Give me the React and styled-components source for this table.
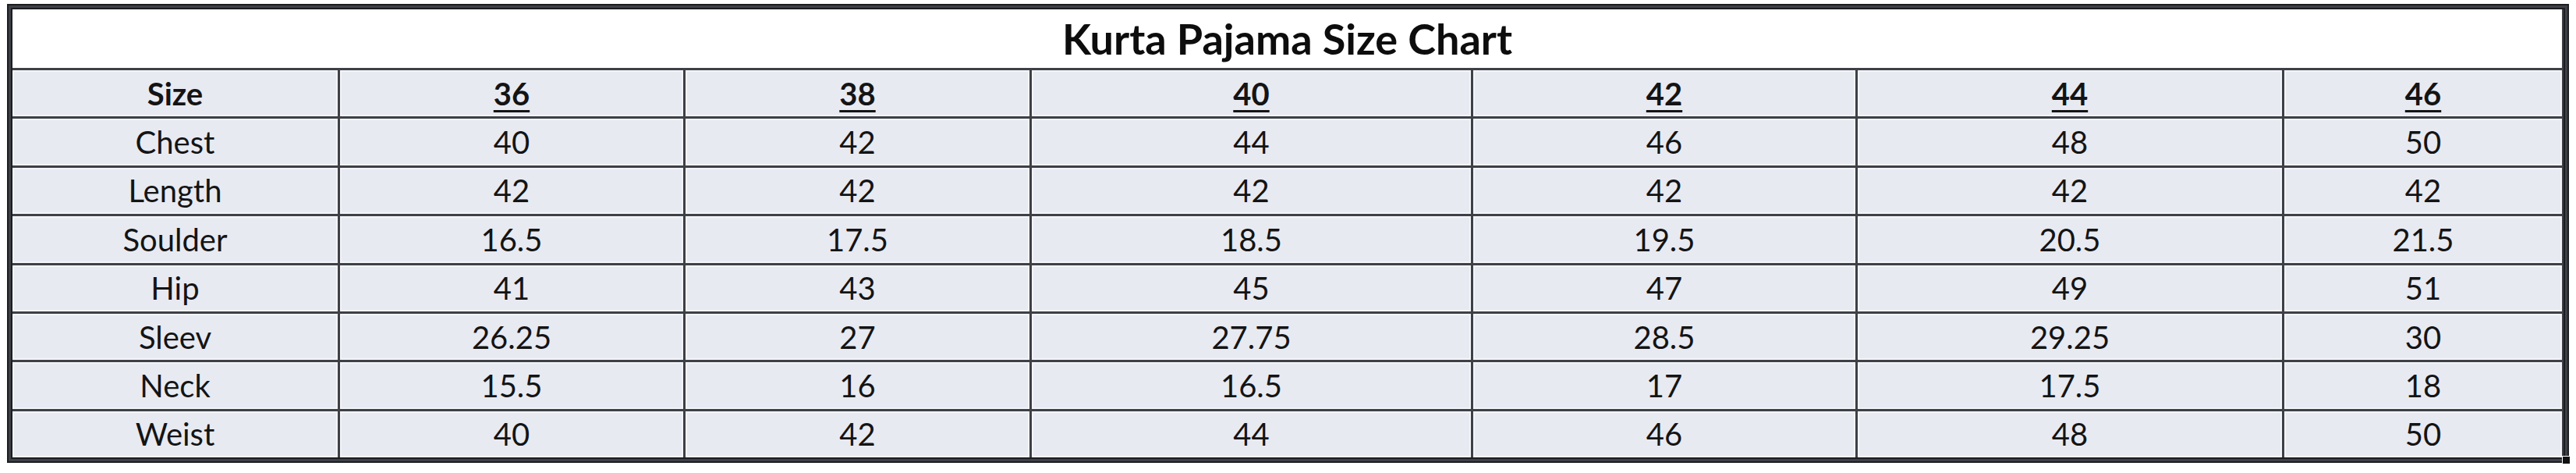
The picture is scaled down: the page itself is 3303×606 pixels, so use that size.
import React from 'react';
import styled, { createGlobalStyle } from 'styled-components';

const GlobalStyle = createGlobalStyle`
    html, body {
        margin: 0;
        padding: 0;
        background: #FFFFFF;
    }
    body {
        font-family: Lato, "Open Sans", "Liberation Sans", sans-serif;
        color: #111111;
    }
`;

const Page = styled.div`
    width: 3303px;
    height: 606px;
    padding: 5px 0 0 9px;
    box-sizing: border-box;
`;

const Frame = styled.div`
    position: relative;
    width: 3285px;
    height: 588px;
    box-sizing: border-box;
    border: 7px double #1c1d20;
    background: #3d4046;
`;

const FillHandle = styled.span`
    position: absolute;
    right: -9px;
    bottom: -9px;
    width: 9px;
    height: 9px;
    background: #111111;
    border: 1px solid #FFFFFF;
`;

const Sheet = styled.div`
    display: grid;
    grid-template-columns: 417px 440px 441px 563px 490px 544px 356px;
    grid-template-rows: 75px repeat(8, 1fr);
    gap: 3px;
    height: 100%;
`;

const Title = styled.div`
    grid-column: 1 / -1;
    display: flex;
    align-items: center;
    justify-content: center;
    background: #FFFFFF;
    font-size: 54px;
    font-weight: 700;
    color: #0d0d0d;
`;

const Cell = styled.div`
    display: flex;
    align-items: center;
    justify-content: center;
    background: #E8EAF2;
    box-shadow: inset 0 0 0 2px #F3F4F8;
    font-size: 40px;
    font-weight: ${props => (props.head ? 700 : 400)};
    color: #141414;
    text-decoration: ${props => (props.underline ? 'underline' : 'none')};
    text-decoration-thickness: 3px;
    text-underline-offset: 6px;
`;

const sizes = ['36', '38', '40', '42', '44', '46'];

const rows = [
    ['Chest', '40', '42', '44', '46', '48', '50'],
    ['Length', '42', '42', '42', '42', '42', '42'],
    ['Soulder', '16.5', '17.5', '18.5', '19.5', '20.5', '21.5'],
    ['Hip', '41', '43', '45', '47', '49', '51'],
    ['Sleev', '26.25', '27', '27.75', '28.5', '29.25', '30'],
    ['Neck', '15.5', '16', '16.5', '17', '17.5', '18'],
    ['Weist', '40', '42', '44', '46', '48', '50'],
];

export default function App() {
    return (
        <>
            <GlobalStyle />
            <Page>
                <Frame>
                    <Sheet>
                        <Title>Kurta Pajama Size Chart</Title>
                        <Cell head>Size</Cell>
                        {sizes.map(size => (
                            <Cell key={size} head underline>{size}</Cell>
                        ))}
                        {rows.map(row => row.map((value, i) => (
                            <Cell key={row[0] + i}>{value}</Cell>
                        )))}
                    </Sheet>
                    <FillHandle />
                </Frame>
            </Page>
        </>
    );
}
